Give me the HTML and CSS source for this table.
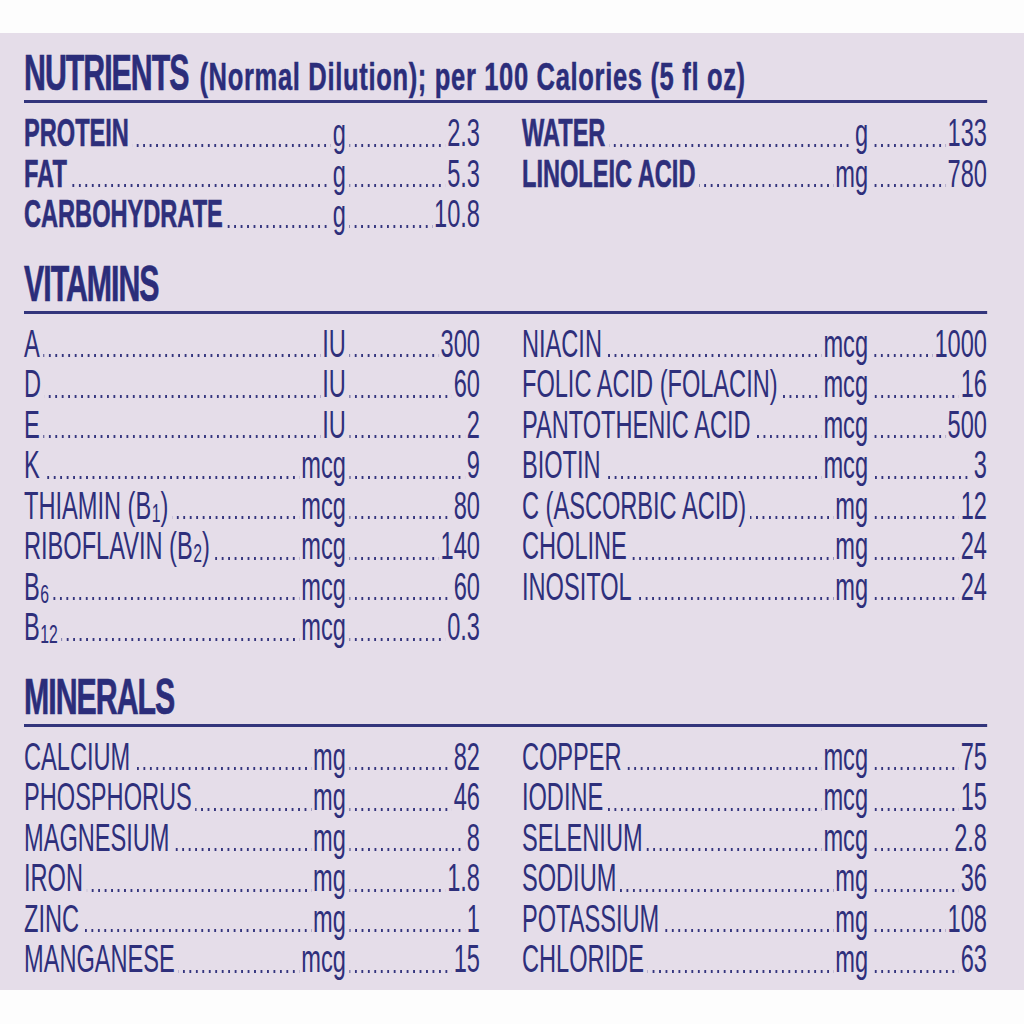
FILE: index.html
```html
<!DOCTYPE html>
<html lang="en">
<head>
<meta charset="utf-8">
<title>Nutrients</title>
<link rel="stylesheet" href="styles.css">
</head>
<body>
<main class="label-panel">
  <div class="scaler">
    <section class="section">
      <h2 class="heading"><span class="heading-main">NUTRIENTS</span> <span class="heading-sub">(Normal Dilution); per 100 Calories (5 fl oz)</span></h2>
      <div class="cols">
        <div class="col col-left">
          <div class="row"><div class="row-main"><span class="name strong">PROTEIN</span><span class="lead"></span><span class="unit">g</span></div><div class="row-rest"><span class="lead"></span><span class="val">2.3</span></div></div>
          <div class="row"><div class="row-main"><span class="name strong">FAT</span><span class="lead"></span><span class="unit">g</span></div><div class="row-rest"><span class="lead"></span><span class="val">5.3</span></div></div>
          <div class="row"><div class="row-main"><span class="name strong">CARBOHYDRATE</span><span class="lead"></span><span class="unit">g</span></div><div class="row-rest"><span class="lead"></span><span class="val">10.8</span></div></div>
        </div>
        <div class="col col-right">
          <div class="row"><div class="row-main"><span class="name strong">WATER</span><span class="lead"></span><span class="unit">g</span></div><div class="row-rest"><span class="lead"></span><span class="val">133</span></div></div>
          <div class="row"><div class="row-main"><span class="name strong">LINOLEIC ACID</span><span class="lead"></span><span class="unit">mg</span></div><div class="row-rest"><span class="lead"></span><span class="val">780</span></div></div>
        </div>
      </div>
    </section>

    <section class="section">
      <h2 class="heading"><span class="heading-main">VITAMINS</span></h2>
      <div class="cols">
        <div class="col col-left">
          <div class="row"><div class="row-main"><span class="name">A</span><span class="lead"></span><span class="unit">IU</span></div><div class="row-rest"><span class="lead"></span><span class="val">300</span></div></div>
          <div class="row"><div class="row-main"><span class="name">D</span><span class="lead"></span><span class="unit">IU</span></div><div class="row-rest"><span class="lead"></span><span class="val">60</span></div></div>
          <div class="row"><div class="row-main"><span class="name">E</span><span class="lead"></span><span class="unit">IU</span></div><div class="row-rest"><span class="lead"></span><span class="val">2</span></div></div>
          <div class="row"><div class="row-main"><span class="name">K</span><span class="lead"></span><span class="unit">mcg</span></div><div class="row-rest"><span class="lead"></span><span class="val">9</span></div></div>
          <div class="row"><div class="row-main"><span class="name">THIAMIN (B<sub>1</sub>)</span><span class="lead"></span><span class="unit">mcg</span></div><div class="row-rest"><span class="lead"></span><span class="val">80</span></div></div>
          <div class="row"><div class="row-main"><span class="name">RIBOFLAVIN (B<sub>2</sub>)</span><span class="lead"></span><span class="unit">mcg</span></div><div class="row-rest"><span class="lead"></span><span class="val">140</span></div></div>
          <div class="row"><div class="row-main"><span class="name">B<sub>6</sub></span><span class="lead"></span><span class="unit">mcg</span></div><div class="row-rest"><span class="lead"></span><span class="val">60</span></div></div>
          <div class="row"><div class="row-main"><span class="name">B<sub>12</sub></span><span class="lead"></span><span class="unit">mcg</span></div><div class="row-rest"><span class="lead"></span><span class="val">0.3</span></div></div>
        </div>
        <div class="col col-right">
          <div class="row"><div class="row-main"><span class="name">NIACIN</span><span class="lead"></span><span class="unit">mcg</span></div><div class="row-rest"><span class="lead"></span><span class="val">1000</span></div></div>
          <div class="row"><div class="row-main"><span class="name">FOLIC ACID (FOLACIN)</span><span class="lead"></span><span class="unit">mcg</span></div><div class="row-rest"><span class="lead"></span><span class="val">16</span></div></div>
          <div class="row"><div class="row-main"><span class="name">PANTOTHENIC ACID</span><span class="lead"></span><span class="unit">mcg</span></div><div class="row-rest"><span class="lead"></span><span class="val">500</span></div></div>
          <div class="row"><div class="row-main"><span class="name">BIOTIN</span><span class="lead"></span><span class="unit">mcg</span></div><div class="row-rest"><span class="lead"></span><span class="val">3</span></div></div>
          <div class="row"><div class="row-main"><span class="name">C (ASCORBIC ACID)</span><span class="lead"></span><span class="unit">mg</span></div><div class="row-rest"><span class="lead"></span><span class="val">12</span></div></div>
          <div class="row"><div class="row-main"><span class="name">CHOLINE</span><span class="lead"></span><span class="unit">mg</span></div><div class="row-rest"><span class="lead"></span><span class="val">24</span></div></div>
          <div class="row"><div class="row-main"><span class="name">INOSITOL</span><span class="lead"></span><span class="unit">mg</span></div><div class="row-rest"><span class="lead"></span><span class="val">24</span></div></div>
        </div>
      </div>
    </section>

    <section class="section">
      <h2 class="heading"><span class="heading-main">MINERALS</span></h2>
      <div class="cols">
        <div class="col col-left">
          <div class="row"><div class="row-main"><span class="name">CALCIUM</span><span class="lead"></span><span class="unit">mg</span></div><div class="row-rest"><span class="lead"></span><span class="val">82</span></div></div>
          <div class="row"><div class="row-main"><span class="name">PHOSPHORUS</span><span class="lead"></span><span class="unit">mg</span></div><div class="row-rest"><span class="lead"></span><span class="val">46</span></div></div>
          <div class="row"><div class="row-main"><span class="name">MAGNESIUM</span><span class="lead"></span><span class="unit">mg</span></div><div class="row-rest"><span class="lead"></span><span class="val">8</span></div></div>
          <div class="row"><div class="row-main"><span class="name">IRON</span><span class="lead"></span><span class="unit">mg</span></div><div class="row-rest"><span class="lead"></span><span class="val">1.8</span></div></div>
          <div class="row"><div class="row-main"><span class="name">ZINC</span><span class="lead"></span><span class="unit">mg</span></div><div class="row-rest"><span class="lead"></span><span class="val">1</span></div></div>
          <div class="row"><div class="row-main"><span class="name">MANGANESE</span><span class="lead"></span><span class="unit">mcg</span></div><div class="row-rest"><span class="lead"></span><span class="val">15</span></div></div>
        </div>
        <div class="col col-right">
          <div class="row"><div class="row-main"><span class="name">COPPER</span><span class="lead"></span><span class="unit">mcg</span></div><div class="row-rest"><span class="lead"></span><span class="val">75</span></div></div>
          <div class="row"><div class="row-main"><span class="name">IODINE</span><span class="lead"></span><span class="unit">mcg</span></div><div class="row-rest"><span class="lead"></span><span class="val">15</span></div></div>
          <div class="row"><div class="row-main"><span class="name">SELENIUM</span><span class="lead"></span><span class="unit">mcg</span></div><div class="row-rest"><span class="lead"></span><span class="val">2.8</span></div></div>
          <div class="row"><div class="row-main"><span class="name">SODIUM</span><span class="lead"></span><span class="unit">mg</span></div><div class="row-rest"><span class="lead"></span><span class="val">36</span></div></div>
          <div class="row"><div class="row-main"><span class="name">POTASSIUM</span><span class="lead"></span><span class="unit">mg</span></div><div class="row-rest"><span class="lead"></span><span class="val">108</span></div></div>
          <div class="row"><div class="row-main"><span class="name">CHLORIDE</span><span class="lead"></span><span class="unit">mg</span></div><div class="row-rest"><span class="lead"></span><span class="val">63</span></div></div>
        </div>
      </div>
    </section>
  </div>
</main>
</body>
</html>
```

FILE: styles.css
```css
* {
  box-sizing: border-box;
}

html,
body {
  margin: 0;
  padding: 0;
  background: #fdfdfd;
  overflow: hidden;
}

body {
  font-family: "Liberation Sans", Arial, sans-serif;
  color: #2e2f7b;
}

.label-panel {
  display: block;
  margin-top: 33px;
  height: 957px;
  background: #e5dde9;
  padding: 15px 0 0 24px;
  overflow: hidden;
}

.scaler {
  width: 1592px;
  transform: scaleX(0.605);
  transform-origin: 0 0;
}

.section + .section {
  margin-top: 24px;
}

.heading {
  margin: 0;
  font-size: 50px;
  line-height: 50px;
  font-weight: 700;
  padding-bottom: 2px;
  border-bottom: 3px solid #33357c;
  white-space: nowrap;
  color: #2b2d7a;
}

.heading-main {
  letter-spacing: -1.6px;
  -webkit-text-stroke: 0.7px currentColor;
}

.heading-sub {
  display: inline-block;
  font-size: 38px;
  line-height: 38px;
  letter-spacing: 1px;
  margin-left: 4px;
  transform: scaleX(1.11);
  transform-origin: 0 50%;
  -webkit-text-stroke: 0.5px currentColor;
}

.cols {
  display: grid;
  grid-template-columns: 753.7px 768.6px;
  column-gap: 69.4px;
  margin-top: 10px;
}

.col-left {
  --unit-x: 532px;
}

.col-right {
  --unit-x: 572px;
}

.row {
  display: flex;
  font-size: 39px;
  line-height: 40.5px;
  white-space: nowrap;
}

.row-main {
  display: flex;
  flex: none;
  width: var(--unit-x);
}

.row-rest {
  display: flex;
  flex: 1;
}

.lead {
  flex: 1;
  min-width: 0;
  margin: 0 3px 0 6px;
  background-image: linear-gradient(to right, #34357e 3.6px, transparent 3.6px);
  background-size: 10.7px 3.4px;
  background-repeat: repeat-x;
  background-position: right 0 top 30.6px;
}

.name.strong {
  font-weight: 700;
  -webkit-text-stroke: 0.6px currentColor;
}

.unit,
.val {
  flex: none;
}

sub {
  font-size: 26px;
  line-height: 0;
  vertical-align: -3px;
  margin-left: 1px;
}
```
